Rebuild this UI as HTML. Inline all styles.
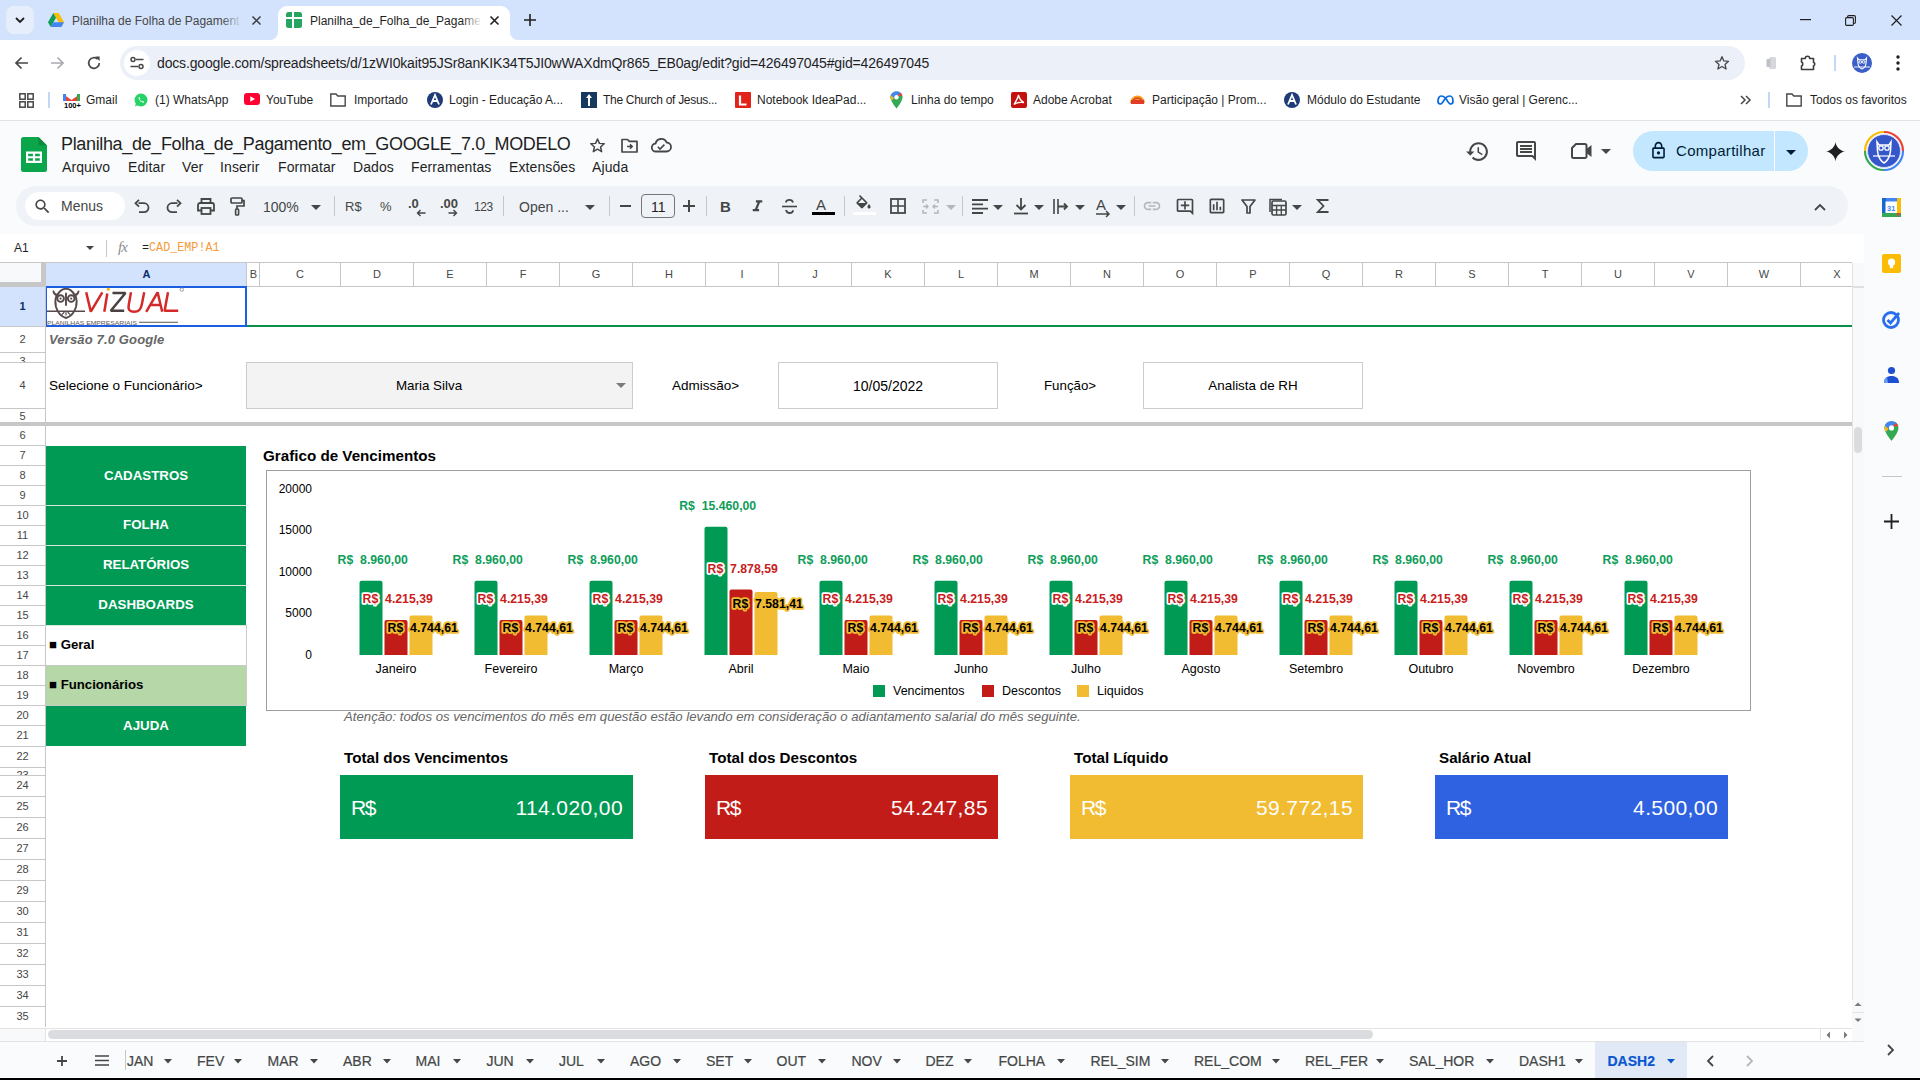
<!DOCTYPE html>
<html><head><meta charset="utf-8">
<style>
*{margin:0;padding:0;box-sizing:border-box}
html,body{width:1920px;height:1080px;overflow:hidden;background:#fff;font-family:"Liberation Sans",sans-serif;position:relative}
.a{position:absolute}
.t{position:absolute;white-space:nowrap;line-height:1}
svg{position:absolute;overflow:visible}
</style></head><body>

<!-- ============ CHROME TAB STRIP ============ -->
<div class="a" style="left:0;top:0;width:1920px;height:40px;background:#d3e3fd"></div>
<div class="a" style="left:6px;top:6px;width:28px;height:28px;border-radius:8px;background:#e6edfb"></div>
<svg style="left:14px;top:14px" width="12" height="12"><path d="M2 4 L6 8 L10 4" stroke="#1f1f1f" stroke-width="1.8" fill="none"/></svg>
<!-- inactive tab -->
<svg style="left:48px;top:13px" width="16" height="14" viewBox="0 0 16 14"><path d="M5.3 0 L10.7 0 L16 9.3 L13.3 14 Z" fill="#fbbc04"/><path d="M5.3 0 L0 9.3 L2.7 14 L8 4.7 Z" fill="#0f9d58"/><path d="M2.7 14 L13.3 14 L16 9.3 L5.3 9.3 Z" fill="#4285f4"/></svg>
<div class="a" style="left:72px;top:10px;width:168px;height:20px;overflow:hidden"><div class="t" id="tab1" style="left:0;top:5px;font-size:12px;color:#474747">Planilha de Folha de Pagamento</div></div>
<div class="a" style="left:222px;top:8px;width:20px;height:24px;background:linear-gradient(90deg,rgba(211,227,253,0),#d3e3fd)"></div>
<svg style="left:252px;top:16px" width="9" height="9"><path d="M0.5 0.5 L8.5 8.5 M8.5 0.5 L0.5 8.5" stroke="#3c3c3c" stroke-width="1.5"/></svg>
<!-- active tab -->
<div class="a" style="left:278px;top:6px;width:232px;height:40px;background:#fff;border-radius:9px 9px 0 0"></div>
<div class="a" style="left:270px;top:32px;width:8px;height:8px;background:#fff"></div>
<div class="a" style="left:262px;top:24px;width:16px;height:16px;background:#d3e3fd;border-radius:0 0 8px 0"></div>
<div class="a" style="left:510px;top:32px;width:8px;height:8px;background:#fff"></div>
<div class="a" style="left:510px;top:24px;width:16px;height:16px;background:#d3e3fd;border-radius:0 0 0 8px"></div>
<svg style="left:286px;top:12px" width="16" height="16"><rect x="0" y="0" width="16" height="16" rx="2.5" fill="#25a55f"/><rect x="0" y="5" width="16" height="2" fill="#fff"/><rect x="6" y="0" width="2" height="16" fill="#fff"/></svg>
<div class="a" style="left:310px;top:10px;width:170px;height:20px;overflow:hidden"><div class="t" id="tab2" style="left:0;top:5px;font-size:12px;color:#1f1f1f">Planilha_de_Folha_de_Pagamento</div></div>
<div class="a" style="left:462px;top:8px;width:20px;height:24px;background:linear-gradient(90deg,rgba(255,255,255,0),#fff)"></div>
<svg style="left:490px;top:16px" width="9" height="9"><path d="M0.5 0.5 L8.5 8.5 M8.5 0.5 L0.5 8.5" stroke="#1f1f1f" stroke-width="1.6"/></svg>
<svg style="left:524px;top:14px" width="12" height="12"><path d="M6 0 V12 M0 6 H12" stroke="#1f1f1f" stroke-width="1.6"/></svg>
<!-- window controls -->
<svg style="left:1800px;top:19px" width="11" height="2"><rect width="11" height="1.2" fill="#1f1f1f"/></svg>
<svg style="left:1845px;top:15px" width="11" height="11"><rect x="0.6" y="2.6" width="7.8" height="7.8" rx="1.2" fill="none" stroke="#1f1f1f" stroke-width="1.1"/><path d="M2.6 2.4 V1.8 A1.2 1.2 0 0 1 3.8 0.6 H9.2 A1.2 1.2 0 0 1 10.4 1.8 V7.2 A1.2 1.2 0 0 1 9.2 8.4 H8.6" fill="none" stroke="#1f1f1f" stroke-width="1.1"/></svg>
<svg style="left:1891px;top:15px" width="11" height="11"><path d="M0.5 0.5 L10.5 10.5 M10.5 0.5 L0.5 10.5" stroke="#1f1f1f" stroke-width="1.2"/></svg>

<!-- ============ CHROME TOOLBAR ============ -->
<div class="a" style="left:0;top:40px;width:1920px;height:80px;background:#fff;border-radius:10px 10px 0 0"></div>
<svg style="left:14px;top:56px" width="15" height="14"><path d="M14 7 H2 M7.5 1.5 L2 7 L7.5 12.5" stroke="#474747" stroke-width="1.7" fill="none"/></svg>
<svg style="left:50px;top:56px" width="15" height="14"><path d="M1 7 H13 M7.5 1.5 L13 7 L7.5 12.5" stroke="#a8abb0" stroke-width="1.7" fill="none"/></svg>
<svg style="left:87px;top:56px" width="14" height="14"><path d="M12.3 7 A5.3 5.3 0 1 1 10.6 3.1" stroke="#474747" stroke-width="1.7" fill="none"/><path d="M8.2 0.5 L12.6 0.5 L12.6 4.9 Z" fill="#474747"/></svg>
<div class="a" style="left:120px;top:46px;width:1625px;height:34px;border-radius:17px;background:#ecf0f9"></div>
<div class="a" style="left:124px;top:50px;width:26px;height:26px;border-radius:13px;background:#fff"></div>
<svg style="left:130px;top:56px" width="14" height="14"><path d="M6 3.5 H13.5 M0.5 10.5 H8" stroke="#474747" stroke-width="1.6"/><circle cx="3" cy="3.5" r="2" fill="none" stroke="#474747" stroke-width="1.5"/><circle cx="11" cy="10.5" r="2" fill="none" stroke="#474747" stroke-width="1.5"/></svg>
<div class="t" id="url" style="left:157px;top:56px;font-size:14px;letter-spacing:-0.16px;color:#1f1f1f">docs.google.com/spreadsheets/d/1zWI0kait95JSr8anKIK34T5JI0wWAXdmQr865_EB0ag/edit?gid=426497045#gid=426497045</div>
<svg style="left:1714px;top:55px" width="16" height="16" viewBox="0 0 24 24"><path d="M12 2.5 L14.8 8.9 L21.8 9.5 L16.5 14.1 L18.1 21 L12 17.3 L5.9 21 L7.5 14.1 L2.2 9.5 L9.2 8.9 Z" fill="none" stroke="#474747" stroke-width="2" stroke-linejoin="round"/></svg>
<svg style="left:1766px;top:56px" width="12" height="14"><rect x="3" y="1" width="7" height="12" rx="1.5" fill="#d5d7da"/><rect x="0.5" y="3" width="4" height="8" rx="1" fill="#bfc1c4"/></svg>
<svg style="left:1799px;top:54px" width="18" height="18" viewBox="0 0 18 18"><path d="M2.5 4.5 H6.3 A2.2 2.2 0 0 1 10.7 4.5 H14.5 V8.2 A1.9 1.9 0 0 1 14.5 11.8 V15.5 H2.5 V12 A2.2 2.2 0 0 0 2.5 8 Z" fill="none" stroke="#3c3c3c" stroke-width="1.6" stroke-linejoin="round"/></svg>
<div class="a" style="left:1834px;top:55px;width:2px;height:16px;background:#c4d7f5"></div>
<svg style="left:1852px;top:53px" width="20" height="20" viewBox="0 0 20 20"><circle cx="10" cy="10" r="10" fill="#3a5fc8"/><path d="M5.5 5 L7 6.8 H13 L14.5 5 L14 10.5 C13.6 13.5 11.5 15.5 10 16 C8.5 15.5 6.4 13.5 6 10.5 Z" fill="none" stroke="#fff" stroke-width="1.1"/><circle cx="8.3" cy="9" r="1.3" fill="none" stroke="#fff" stroke-width="0.9"/><circle cx="11.7" cy="9" r="1.3" fill="none" stroke="#fff" stroke-width="0.9"/><path d="M2 14 H18" stroke="#fff" stroke-width="0.9"/></svg>
<svg style="left:1896px;top:55px" width="4" height="16"><circle cx="2" cy="2" r="1.7" fill="#1f1f1f"/><circle cx="2" cy="8" r="1.7" fill="#1f1f1f"/><circle cx="2" cy="14" r="1.7" fill="#1f1f1f"/></svg>

<!-- ============ BOOKMARKS ============ -->

<svg style="left:19px;top:93px" width="15" height="15"><rect x="0.8" y="0.8" width="5.4" height="5.4" fill="none" stroke="#474747" stroke-width="1.5"/><rect x="8.8" y="0.8" width="5.4" height="5.4" fill="none" stroke="#474747" stroke-width="1.5"/><rect x="0.8" y="8.8" width="5.4" height="5.4" fill="none" stroke="#474747" stroke-width="1.5"/><rect x="8.8" y="8.8" width="5.4" height="5.4" fill="none" stroke="#474747" stroke-width="1.5"/></svg>
<div class="a" style="left:48px;top:92px;width:2px;height:16px;background:#c4d7f5"></div>
<svg style="left:63px;top:92px" width="17" height="16"><path d="M0 2 L8.5 8 L17 2 V9 H0 Z" fill="#ea4335"/><rect x="0" y="2" width="3" height="7" fill="#4285f4"/><rect x="14" y="2" width="3" height="7" fill="#34a853"/><rect x="1" y="9" width="16" height="7" fill="#fff"/><text x="1" y="15.5" font-size="7.5" font-family="Liberation Sans" font-weight="bold" fill="#000">100+</text></svg>
<div class="t" style="left:86px;top:94px;font-size:12px;color:#1f1f1f">Gmail</div>
<svg style="left:134px;top:93px" width="14" height="14"><circle cx="7" cy="7" r="6.5" fill="#25d366"/><path d="M1 13.5 L2 10 L4 12 Z" fill="#25d366"/><path d="M4.6 4.2 C4.2 5.5 5.8 8.4 8.5 9.6 C9.4 10 10 9.5 10.2 9 L9 8 L8.2 8.5 C7 8 6 7 5.6 6 L6.2 5.2 L5.4 4 Z" fill="#fff"/></svg>
<div class="t" style="left:155px;top:94px;font-size:12px;color:#1f1f1f">(1) WhatsApp</div>
<svg style="left:244px;top:93px" width="16" height="12"><rect width="16" height="12" rx="3" fill="#ff0033"/><path d="M6.3 3.3 L11 6 L6.3 8.7 Z" fill="#fff"/></svg>
<div class="t" style="left:266px;top:94px;font-size:12px;color:#1f1f1f">YouTube</div>
<svg style="left:330px;top:93px" width="16" height="14"><path d="M0.8 1 H6 L7.8 3 H15.2 V13 H0.8 Z" fill="none" stroke="#474747" stroke-width="1.4"/></svg>
<div class="t" style="left:354px;top:94px;font-size:12px;color:#1f1f1f">Importado</div>
<svg style="left:427px;top:92px" width="16" height="16"><circle cx="8" cy="8" r="8" fill="#1e3a78"/><path d="M4 12.5 L8 3 L12 12.5 M5.6 9 H10.4" stroke="#fff" stroke-width="1.8" fill="none"/></svg>
<div class="t" style="left:449px;top:94px;font-size:12px;color:#1f1f1f">Login - Educação A...</div>
<svg style="left:581px;top:92px" width="16" height="16"><rect width="16" height="16" fill="#16395e"/><path d="M8 2 L11 6 H9 V14 H7 V6 H5 Z" fill="#fff"/></svg>
<div class="t" style="left:603px;top:94px;font-size:12px;letter-spacing:-0.3px;color:#1f1f1f">The Church of Jesus...</div>
<svg style="left:735px;top:92px" width="16" height="16"><rect width="16" height="16" rx="1" fill="#e2231a"/><path d="M5 3.5 V12.5 H11.5" stroke="#fff" stroke-width="2.2" fill="none"/></svg>
<div class="t" style="left:757px;top:94px;font-size:12px;color:#1f1f1f">Notebook IdeaPad...</div>
<svg style="left:890px;top:91px" width="13" height="18"><path d="M6.5 0.5 C3 0.5 0.5 3 0.5 6.3 C0.5 10.5 6.5 17.5 6.5 17.5 C6.5 17.5 12.5 10.5 12.5 6.3 C12.5 3 10 0.5 6.5 0.5 Z" fill="#34a853"/><path d="M6.5 0.5 C3 0.5 0.5 3 0.5 6.3 C0.5 7.5 1 8.7 1.6 9.8 L10.8 1.8 C9.7 1 8.2 0.5 6.5 0.5Z" fill="#4285f4"/><path d="M1.6 9.8 L4 7 L0.7 4.5 C0.5 5 0.5 5.6 0.5 6.3 C0.5 7.5 1 8.7 1.6 9.8Z" fill="#fbbc04"/><path d="M10.8 1.8 L6.5 5.5 L12.3 4.6 C12 3.5 11.5 2.5 10.8 1.8Z" fill="#ea4335"/><circle cx="6.5" cy="6.3" r="2.2" fill="#fff"/></svg>
<div class="t" style="left:911px;top:94px;font-size:12px;color:#1f1f1f">Linha do tempo</div>
<svg style="left:1011px;top:92px" width="16" height="16"><rect width="16" height="16" rx="2" fill="#c5110d"/><path d="M3 12.5 C5 9.5 7 5 7.5 3 C8 5.5 10 9 13 10.5 C10 10 6 10.5 3 12.5 Z" fill="none" stroke="#fff" stroke-width="1.3"/></svg>
<div class="t" style="left:1033px;top:94px;font-size:12px;color:#1f1f1f">Adobe Acrobat</div>
<svg style="left:1129px;top:93px" width="17" height="12"><path d="M1 10 A7.5 7.5 0 0 1 16 10 Z" fill="#f6a21b"/><path d="M3.5 10 A5 5 0 0 1 13.5 10" stroke="#e23b2c" stroke-width="1.6" fill="none"/><rect x="2" y="7" width="13" height="4" fill="#e23b2c"/></svg>
<div class="t" style="left:1152px;top:94px;font-size:12px;color:#1f1f1f">Participação | Prom...</div>
<svg style="left:1284px;top:92px" width="16" height="16"><circle cx="8" cy="8" r="8" fill="#1e3a78"/><path d="M4 12.5 L8 3 L12 12.5 M5.6 9 H10.4" stroke="#fff" stroke-width="1.8" fill="none"/></svg>
<div class="t" style="left:1307px;top:94px;font-size:12px;color:#1f1f1f">Módulo do Estudante</div>
<svg style="left:1437px;top:95px" width="17" height="10"><path d="M4.2 1 C2 1 1 4 1 6 C1 8 2 9 3.2 9 C5.5 9 7.5 4 8.5 3 C9.5 2 11 1 12.8 1 C15 1 16 4 16 6 C16 8 15 9 13.8 9 C11.5 9 9.5 4 8.5 3 C7.5 2 6 1 4.2 1 Z" fill="none" stroke="#0668e1" stroke-width="1.7"/></svg>
<div class="t" style="left:1459px;top:94px;font-size:12px;color:#1f1f1f">Visão geral | Gerenc...</div>
<svg style="left:1740px;top:95px" width="12" height="10"><path d="M1 1 L5 5 L1 9 M6 1 L10 5 L6 9" stroke="#474747" stroke-width="1.5" fill="none"/></svg>
<div class="a" style="left:1768px;top:92px;width:2px;height:16px;background:#c4d7f5"></div>
<svg style="left:1786px;top:93px" width="16" height="14"><path d="M0.8 1 H6 L7.8 3 H15.2 V13 H0.8 Z" fill="none" stroke="#474747" stroke-width="1.4"/></svg>
<div class="t" style="left:1810px;top:94px;font-size:12px;color:#1f1f1f">Todos os favoritos</div>

<div class="a" style="left:0;top:120px;width:1920px;height:1px;background:#e3e3e3"></div>

<!-- ============ SHEETS HEADER ============ -->
<div class="a" style="left:0;top:121px;width:1920px;height:113px;background:#f9fbfd"></div>
<svg style="left:21px;top:137px" width="26" height="35" viewBox="0 0 26 35"><path d="M0 2.5 A2.5 2.5 0 0 1 2.5 0 H17.5 L26 8.5 V32.5 A2.5 2.5 0 0 1 23.5 35 H2.5 A2.5 2.5 0 0 1 0 32.5 Z" fill="#0ba64c"/><path d="M17.5 0 L26 8.5 H19.5 A2 2 0 0 1 17.5 6.5 Z" fill="#0a8a3e"/><path d="M5 14.5 H21 V26 H5 Z M7.2 16.7 V19.3 H11.9 V16.7 Z M14.1 16.7 V19.3 H18.8 V16.7 Z M7.2 21.3 V23.8 H11.9 V21.3 Z M14.1 21.3 V23.8 H18.8 V21.3 Z" fill="#fff" fill-rule="evenodd"/></svg>
<div class="t" style="left:61px;top:135px;font-size:18px;letter-spacing:-0.35px;color:#1f1f1f">Planilha_de_Folha_de_Pagamento_em_GOOGLE_7.0_MODELO</div>
<svg style="left:589px;top:137px" width="17" height="17" viewBox="0 0 24 24"><path d="M12 2.8 L14.7 9 L21.5 9.6 L16.3 14.1 L17.9 20.8 L12 17.2 L6.1 20.8 L7.7 14.1 L2.5 9.6 L9.3 9 Z" fill="none" stroke="#444746" stroke-width="2.1" stroke-linejoin="round"/></svg>
<svg style="left:621px;top:138px" width="17" height="15" viewBox="0 0 17 15"><path d="M1 1.5 H6.5 L8.3 3.3 H16 V14 H1 Z" fill="none" stroke="#444746" stroke-width="1.7" stroke-linejoin="round"/><path d="M6 8.6 H11 M9 6.4 L11.2 8.6 L9 10.8" stroke="#444746" stroke-width="1.5" fill="none"/></svg>
<svg style="left:651px;top:137px" width="20" height="16" viewBox="0 0 20 16"><path d="M5 14.5 A4 4 0 0 1 4.6 6.5 A5.8 5.8 0 0 1 15.6 5.5 A4.5 4.5 0 0 1 15.5 14.5 Z" fill="none" stroke="#444746" stroke-width="1.8" stroke-linejoin="round"/><path d="M6.8 9.8 L9 12 L13.4 7.6" stroke="#444746" stroke-width="1.6" fill="none"/></svg>
<div class="t" style="left:62px;top:160px;font-size:14px;letter-spacing:0.1px;color:#1f1f1f">Arquivo</div>
<div class="t" style="left:128px;top:160px;font-size:14px;letter-spacing:0.1px;color:#1f1f1f">Editar</div>
<div class="t" style="left:182px;top:160px;font-size:14px;letter-spacing:0.1px;color:#1f1f1f">Ver</div>
<div class="t" style="left:220px;top:160px;font-size:14px;letter-spacing:0.1px;color:#1f1f1f">Inserir</div>
<div class="t" style="left:278px;top:160px;font-size:14px;letter-spacing:0.1px;color:#1f1f1f">Formatar</div>
<div class="t" style="left:353px;top:160px;font-size:14px;letter-spacing:0.1px;color:#1f1f1f">Dados</div>
<div class="t" style="left:411px;top:160px;font-size:14px;letter-spacing:0.1px;color:#1f1f1f">Ferramentas</div>
<div class="t" style="left:509px;top:160px;font-size:14px;letter-spacing:0.1px;color:#1f1f1f">Extensões</div>
<div class="t" style="left:592px;top:160px;font-size:14px;letter-spacing:0.1px;color:#1f1f1f">Ajuda</div>
<svg style="left:1465px;top:139px" width="25" height="25" viewBox="0 0 24 24"><path d="M13 3c-4.97 0-9 4.03-9 9H1l3.89 3.89.07.14L9 12H6c0-3.87 3.13-7 7-7s7 3.13 7 7-3.13 7-7 7c-1.93 0-3.68-.79-4.94-2.06l-1.42 1.42C8.27 19.99 10.51 21 13 21c4.97 0 9-4.03 9-9s-4.03-9-9-9zm-1 5v5l4.28 2.54.72-1.21-3.5-2.08V8H12z" fill="#444746"/></svg>
<svg style="left:1514px;top:139px" width="24" height="24" viewBox="0 0 24 24"><path d="M21.99 4c0-1.1-.89-2-1.99-2H4c-1.1 0-2 .9-2 2v12c0 1.1.9 2 2 2h14l4 4-.01-18zM20 4v13.17L18.83 16H4V4h16zM6 12h12v2H6zm0-3h12v2H6zm0-3h12v2H6z" fill="#444746"/></svg>
<svg style="left:1571px;top:143px" width="22" height="16" viewBox="0 0 22 16"><path d="M5 1 H14 A1.5 1.5 0 0 1 15.5 2.5 V13.5 A1.5 1.5 0 0 1 14 15 H2.5 A1.5 1.5 0 0 1 1 13.5 V5 Z" fill="none" stroke="#444746" stroke-width="2" stroke-linejoin="round"/><path d="M15.5 6 L20.5 2 V14 L15.5 10 Z" fill="#444746"/></svg>
<svg style="left:1601px;top:149px" width="10" height="5"><path d="M0 0 L10 0 L5 5 Z" fill="#444746"/></svg>
<div class="a" style="left:1633px;top:131px;width:175px;height:40px;border-radius:20px;background:#c2e7ff"></div>
<div class="a" style="left:1774px;top:131px;width:1px;height:40px;background:#f9fbfd"></div>
<svg style="left:1649px;top:141px" width="19" height="19" viewBox="0 0 24 24"><path d="M18 8h-1V6c0-2.76-2.24-5-5-5S7 3.24 7 6v2H6c-1.1 0-2 .9-2 2v10c0 1.1.9 2 2 2h12c1.1 0 2-.9 2-2V10c0-1.1-.9-2-2-2zM9 6c0-1.66 1.34-3 3-3s3 1.34 3 3v2H9V6zm9 14H6V10h12v10zm-6-3c1.1 0 2-.9 2-2s-.9-2-2-2-2 .9-2 2 .9 2 2 2z" fill="#001d35"/></svg>
<div class="t" style="left:1676px;top:143px;font-size:15px;letter-spacing:0.3px;color:#001d35">Compartilhar</div>
<svg style="left:1786px;top:150px" width="10" height="5"><path d="M0 0 L10 0 L5 5 Z" fill="#001d35"/></svg>
<svg style="left:1825px;top:141px" width="21" height="21" viewBox="0 0 24 24"><path d="M12 1 C12.6 6.5 17.5 11.4 23 12 C17.5 12.6 12.6 17.5 12 23 C11.4 17.5 6.5 12.6 1 12 C6.5 11.4 11.4 6.5 12 1 Z" fill="#1f1f1f"/></svg>
<svg style="left:1864px;top:131px" width="40" height="40" viewBox="0 0 40 40"><path d="M20 1 A19 19 0 0 1 39 20" stroke="#ea4335" stroke-width="2.2" fill="none"/><path d="M39 20 A19 19 0 0 1 20 39" stroke="#4285f4" stroke-width="2.2" fill="none"/><path d="M20 39 A19 19 0 0 1 1 20" stroke="#34a853" stroke-width="2.2" fill="none"/><path d="M1 20 A19 19 0 0 1 20 1" stroke="#fbbc04" stroke-width="2.2" fill="none"/><circle cx="20" cy="20" r="16.5" fill="#3557c9"/><circle cx="20" cy="20" r="16.5" fill="none" stroke="#dfe6ff" stroke-width="0.8"/><path d="M13 11 L15 14 H25 L27 11 L26.5 20 C26 27 22 31 20 32 C18 31 14 27 13.5 20 Z" fill="none" stroke="#fff" stroke-width="1.5"/><circle cx="17" cy="17" r="2.2" fill="none" stroke="#fff" stroke-width="1.3"/><circle cx="23" cy="17" r="2.2" fill="none" stroke="#fff" stroke-width="1.3"/><path d="M9 25 H31" stroke="#fff" stroke-width="1.2"/></svg>
<div class="a" style="left:16px;top:186px;width:1832px;height:40px;border-radius:20px;background:#eff2f7"></div>
<div class="a" style="left:25px;top:192px;width:100px;height:28px;border-radius:14px;background:#fff"></div>
<svg style="left:33px;top:197px" width="19" height="19" viewBox="0 0 24 24"><path d="M15.5 14h-.79l-.28-.27C15.41 12.59 16 11.11 16 9.5 16 5.91 13.09 3 9.5 3S3 5.91 3 9.5 5.91 16 9.5 16c1.61 0 3.09-.59 4.23-1.57l.27.28v.79l5 4.99L20.49 19l-4.99-5zm-6 0C7.01 14 5 11.99 5 9.5S7.01 5 9.5 5 14 7.01 14 9.5 11.99 14 9.5 14z" fill="#444746"/></svg>
<div class="t" style="left:61px;top:199px;font-size:14px;color:#444746">Menus</div>
<svg style="left:134px;top:199px" width="16" height="15" viewBox="0 0 16 15"><path d="M4.5 4.2 H10 A4.5 4.5 0 0 1 10 13.2 H5" stroke="#444746" stroke-width="1.8" fill="none"/><path d="M5 0.8 L1.5 4.2 L5 7.6" stroke="#444746" stroke-width="1.8" fill="none"/></svg>
<svg style="left:166px;top:199px" width="16" height="15" viewBox="0 0 16 15"><path d="M11.5 4.2 H6 A4.5 4.5 0 0 0 6 13.2 H11" stroke="#444746" stroke-width="1.8" fill="none"/><path d="M11 0.8 L14.5 4.2 L11 7.6" stroke="#444746" stroke-width="1.8" fill="none"/></svg>
<svg style="left:197px;top:198px" width="18" height="17" viewBox="0 0 18 17"><path d="M4.5 5 V1 H13.5 V5" stroke="#444746" stroke-width="1.8" fill="none"/><path d="M4.5 12.5 H1 V7 A2 2 0 0 1 3 5 H15 A2 2 0 0 1 17 7 V12.5 H13.5" stroke="#444746" stroke-width="1.8" fill="none"/><rect x="4.5" y="10" width="9" height="6" stroke="#444746" stroke-width="1.8" fill="none"/></svg>
<svg style="left:230px;top:197px" width="15" height="19" viewBox="0 0 15 19"><rect x="1" y="1" width="11" height="5" rx="1" stroke="#444746" stroke-width="1.7" fill="none"/><path d="M12 3.5 H14 V9 H7 V12" stroke="#444746" stroke-width="1.7" fill="none"/><rect x="5.6" y="12" width="3" height="6" rx="0.8" stroke="#444746" stroke-width="1.6" fill="none"/></svg>
<div class="t" style="left:263px;top:200px;font-size:14px;color:#444746">100%</div>
<svg style="left:311px;top:205px" width="10" height="5"><path d="M0 0 L10 0 L5 5 Z" fill="#444746"/></svg>
<div class="a" style="left:334px;top:196px;width:1px;height:20px;background:#c7c7c7"></div>
<div class="t" style="left:345px;top:200px;font-size:13px;color:#444746">R$</div>
<div class="t" style="left:380px;top:200px;font-size:13px;color:#444746">%</div>
<div class="t" style="left:408px;top:197px;font-size:13px;font-weight:bold;color:#444746">.0</div>
<svg style="left:416px;top:209px" width="10" height="8"><path d="M9.5 4 H2 M4.5 1 L1.5 4 L4.5 7" stroke="#444746" stroke-width="1.4" fill="none"/></svg>
<div class="t" style="left:440px;top:197px;font-size:13px;font-weight:bold;color:#444746">.00</div>
<svg style="left:448px;top:209px" width="10" height="8"><path d="M0.5 4 H8 M5.5 1 L8.5 4 L5.5 7" stroke="#444746" stroke-width="1.4" fill="none"/></svg>
<div class="t" style="left:474px;top:201px;font-size:12px;letter-spacing:-0.4px;color:#444746">123</div>
<div class="a" style="left:503px;top:196px;width:1px;height:20px;background:#c7c7c7"></div>
<div class="t" style="left:519px;top:200px;font-size:14px;color:#444746">Open ...</div>
<svg style="left:585px;top:205px" width="10" height="5"><path d="M0 0 L10 0 L5 5 Z" fill="#444746"/></svg>
<div class="a" style="left:609px;top:196px;width:1px;height:20px;background:#c7c7c7"></div>
<div class="a" style="left:620px;top:205px;width:11px;height:2px;background:#444746"></div>
<div class="a" style="left:641px;top:194px;width:34px;height:24px;border:1px solid #747775;border-radius:4px"></div>
<div class="t" style="left:651px;top:200px;font-size:14px;color:#1f1f1f">11</div>
<svg style="left:683px;top:200px" width="12" height="12"><path d="M6 0 V12 M0 6 H12" stroke="#444746" stroke-width="2"/></svg>
<div class="a" style="left:706px;top:196px;width:1px;height:20px;background:#c7c7c7"></div>
<div class="t" style="left:720px;top:199px;font-size:15px;font-weight:bold;color:#444746">B</div>
<svg style="left:748px;top:197px" width="19" height="19" viewBox="0 0 24 24"><path d="M10 4v3h2.21l-3.42 8H6v3h8v-3h-2.21l3.42-8H18V4z" fill="#444746"/></svg>
<svg style="left:781px;top:198px" width="17" height="17" viewBox="0 0 17 17"><path d="M12 4.5 C11.5 2.5 10 1.8 8.5 1.8 C6.5 1.8 5 3 5 4.5 M5 12 C5.5 14 7 15 8.5 15 C10.5 15 12 13.8 12 12.2" stroke="#444746" stroke-width="1.8" fill="none"/><path d="M1 8.5 H16" stroke="#444746" stroke-width="1.6"/></svg>
<div class="t" style="left:816px;top:197px;font-size:15px;color:#444746">A</div>
<div class="a" style="left:812px;top:212px;width:23px;height:3px;background:#000"></div>
<div class="a" style="left:844px;top:196px;width:1px;height:20px;background:#c7c7c7"></div>
<svg style="left:854px;top:195px" width="19" height="19" viewBox="0 0 24 24"><path d="M16.56 8.94L7.62 0 6.21 1.41l2.38 2.38-5.15 5.15c-.59.59-.59 1.54 0 2.12l5.5 5.5c.29.29.68.44 1.06.44s.77-.15 1.06-.44l5.5-5.5c.59-.58.59-1.53 0-2.12zM5.21 10L10 5.21 14.79 10H5.21zM19 11.5s-2 2.17-2 3.5c0 1.1.9 2 2 2s2-.9 2-2c0-1.33-2-3.5-2-3.5z" fill="#444746"/></svg>
<div class="a" style="left:853px;top:212px;width:23px;height:3px;background:#fff"></div>
<svg style="left:890px;top:198px" width="16" height="16" viewBox="0 0 16 16"><rect x="1" y="1" width="14" height="14" stroke="#444746" stroke-width="1.8" fill="none"/><path d="M8 1 V15 M1 8 H15" stroke="#444746" stroke-width="1.6"/></svg>
<svg style="left:922px;top:199px" width="17" height="15" viewBox="0 0 17 15"><path d="M1 4 V1 H5 M12 1 H16 V4 M16 11 V14 H12 M5 14 H1 V11" stroke="#b4b7bb" stroke-width="1.6" fill="none"/><path d="M1 7.5 H6 M4 5.5 L6 7.5 L4 9.5 M16 7.5 H11 M13 5.5 L11 7.5 L13 9.5" stroke="#b4b7bb" stroke-width="1.4" fill="none"/></svg>
<svg style="left:946px;top:205px" width="10" height="5"><path d="M0 0 L10 0 L5 5 Z" fill="#b4b7bb"/></svg>
<div class="a" style="left:962px;top:196px;width:1px;height:20px;background:#c7c7c7"></div>
<svg style="left:972px;top:199px" width="16" height="15" viewBox="0 0 16 15"><path d="M0 1 H16 M0 5.3 H11 M0 9.6 H16 M0 14 H11" stroke="#444746" stroke-width="1.8"/></svg>
<svg style="left:993px;top:205px" width="10" height="5"><path d="M0 0 L10 0 L5 5 Z" fill="#444746"/></svg>
<svg style="left:1013px;top:198px" width="16" height="17" viewBox="0 0 16 17"><path d="M8 0 V11 M3.5 7 L8 11.5 L12.5 7" stroke="#444746" stroke-width="1.8" fill="none"/><path d="M1 15.5 H15" stroke="#444746" stroke-width="1.8"/></svg>
<svg style="left:1034px;top:205px" width="10" height="5"><path d="M0 0 L10 0 L5 5 Z" fill="#444746"/></svg>
<svg style="left:1053px;top:198px" width="17" height="17" viewBox="0 0 17 17"><path d="M1 1 V16 M5 1 V16" stroke="#444746" stroke-width="1.6"/><path d="M5 8.5 H14 M11 5.5 L14 8.5 L11 11.5" stroke="#444746" stroke-width="1.8" fill="none"/></svg>
<svg style="left:1075px;top:205px" width="10" height="5"><path d="M0 0 L10 0 L5 5 Z" fill="#444746"/></svg>
<div class="t" style="left:1096px;top:197px;font-size:15px;color:#444746">A</div>
<svg style="left:1096px;top:208px" width="16" height="8"><path d="M0 6 H13 M10 3 L13 6 L10 9" stroke="#444746" stroke-width="1.5" fill="none"/></svg>
<svg style="left:1116px;top:205px" width="10" height="5"><path d="M0 0 L10 0 L5 5 Z" fill="#444746"/></svg>
<div class="a" style="left:1134px;top:196px;width:1px;height:20px;background:#c7c7c7"></div>
<svg style="left:1142px;top:196px" width="20" height="20" viewBox="0 0 24 24"><path d="M3.9 12c0-1.71 1.39-3.1 3.1-3.1h4V7H7c-2.76 0-5 2.24-5 5s2.24 5 5 5h4v-1.9H7c-1.71 0-3.1-1.39-3.1-3.1zM8 13h8v-2H8v2zm9-6h-4v1.9h4c1.71 0 3.1 1.39 3.1 3.1s-1.39 3.1-3.1 3.1h-4V17h4c2.76 0 5-2.24 5-5s-2.24-5-5-5z" fill="#b4b7bb"/></svg>
<svg style="left:1175px;top:197px" width="20" height="20" viewBox="0 0 24 24"><path d="M22 4c0-1.1-.9-2-2-2H4c-1.1 0-1.99.9-1.99 2L2 16c0 1.1.9 2 2 2h14l4 4V4zm-2 13.17L18.83 16H4V4h16v13.17zM13 5h-2v4H7v2h4v4h2v-4h4V9h-4z" fill="#444746"/></svg>
<svg style="left:1207px;top:196px" width="20" height="20" viewBox="0 0 24 24"><path d="M19 3H5c-1.1 0-2 .9-2 2v14c0 1.1.9 2 2 2h14c1.1 0 2-.9 2-2V5c0-1.1-.9-2-2-2zm0 16H5V5h14v14zM7 10h2v7H7zm4-3h2v10h-2zm4 6h2v4h-2z" fill="#444746"/></svg>
<svg style="left:1241px;top:199px" width="15" height="15" viewBox="0 0 15 15"><path d="M1 1 H14 L9 7.5 V14 H6 V7.5 Z" stroke="#444746" stroke-width="1.7" fill="none" stroke-linejoin="round"/></svg>
<svg style="left:1269px;top:198px" width="18" height="18" viewBox="0 0 18 18"><rect x="3" y="3" width="14" height="14" rx="1.5" stroke="#444746" stroke-width="1.7" fill="none"/><path d="M1 14 V1.5 H13" stroke="#444746" stroke-width="1.5" fill="none"/><path d="M3 7.5 H17 M3 12 H17 M7.6 7.5 V17 M12.3 7.5 V17" stroke="#444746" stroke-width="1.3"/></svg>
<svg style="left:1292px;top:205px" width="10" height="5"><path d="M0 0 L10 0 L5 5 Z" fill="#444746"/></svg>
<svg style="left:1317px;top:199px" width="12" height="14" viewBox="0 0 12 14"><path d="M11.5 1 H0.8 L6.5 7 L0.8 13 H11.5" stroke="#444746" stroke-width="1.8" fill="none"/></svg>
<svg style="left:1814px;top:203px" width="12" height="8"><path d="M1 7 L6 2 L11 7" stroke="#444746" stroke-width="1.8" fill="none"/></svg>

<!-- ============ FORMULA BAR ============ -->
<div class="a" style="left:0;top:234px;width:1864px;height:28px;background:#fff"></div>
<div id="fbar"></div>

<!-- ============ GRID ============ -->
<div class="t" style="left:14px;top:242px;font-size:12px;color:#1f1f1f">A1</div>
<svg style="left:86px;top:246px" width="8" height="4"><path d="M0 0 H8 L4 4 Z" fill="#444746"/></svg>
<div class="a" style="left:106px;top:240px;width:1px;height:17px;background:#c7c7c7"></div>
<div class="t" style="left:118px;top:240px;font-size:15px;font-style:italic;font-family:'Liberation Serif',serif;color:#8a8d91;letter-spacing:-1px">fx</div>
<div class="t" style="left:142px;top:241px;font-size:13.5px;font-family:'Liberation Mono',monospace;color:#f49b3a;transform:scaleX(0.87);transform-origin:0 0"><span style="color:#1f1f1f">=</span>CAD_EMP!A1</div>
<div class="a" style="left:0;top:262px;width:1852px;height:1px;background:#c7c7c7"></div>
<div class="a" style="left:0;top:263px;width:41px;height:19px;background:#f8f9fa"></div>
<div class="a" style="left:41px;top:263px;width:5px;height:23px;background:#c7c7c7"></div>
<div class="a" style="left:0;top:282px;width:46px;height:5px;background:#c7c7c7"></div>
<div class="a" style="left:46px;top:263px;width:200px;height:23px;background:#d3e3fd"></div>
<div class="a" style="left:46px;top:286px;width:1806px;height:1px;background:#c7c7c7"></div>
<div class="a" style="left:246px;top:263px;width:1px;height:23px;background:#c7c7c7"></div>
<div class="t" style="left:126.5px;width:40px;text-align:center;top:269px;font-size:11px;font-weight:bold;color:#0b2e6b;">A</div>
<div class="a" style="left:259px;top:263px;width:1px;height:23px;background:#c7c7c7"></div>
<div class="t" style="left:233.5px;width:40px;text-align:center;top:269px;font-size:11px;color:#444746;">B</div>
<div class="a" style="left:340px;top:263px;width:1px;height:23px;background:#c7c7c7"></div>
<div class="t" style="left:280.0px;width:40px;text-align:center;top:269px;font-size:11px;color:#444746;">C</div>
<div class="a" style="left:413px;top:263px;width:1px;height:23px;background:#c7c7c7"></div>
<div class="t" style="left:357.0px;width:40px;text-align:center;top:269px;font-size:11px;color:#444746;">D</div>
<div class="a" style="left:486px;top:263px;width:1px;height:23px;background:#c7c7c7"></div>
<div class="t" style="left:430.0px;width:40px;text-align:center;top:269px;font-size:11px;color:#444746;">E</div>
<div class="a" style="left:559px;top:263px;width:1px;height:23px;background:#c7c7c7"></div>
<div class="t" style="left:503.0px;width:40px;text-align:center;top:269px;font-size:11px;color:#444746;">F</div>
<div class="a" style="left:632px;top:263px;width:1px;height:23px;background:#c7c7c7"></div>
<div class="t" style="left:576.0px;width:40px;text-align:center;top:269px;font-size:11px;color:#444746;">G</div>
<div class="a" style="left:705px;top:263px;width:1px;height:23px;background:#c7c7c7"></div>
<div class="t" style="left:649.0px;width:40px;text-align:center;top:269px;font-size:11px;color:#444746;">H</div>
<div class="a" style="left:778px;top:263px;width:1px;height:23px;background:#c7c7c7"></div>
<div class="t" style="left:722.0px;width:40px;text-align:center;top:269px;font-size:11px;color:#444746;">I</div>
<div class="a" style="left:851px;top:263px;width:1px;height:23px;background:#c7c7c7"></div>
<div class="t" style="left:795.0px;width:40px;text-align:center;top:269px;font-size:11px;color:#444746;">J</div>
<div class="a" style="left:924px;top:263px;width:1px;height:23px;background:#c7c7c7"></div>
<div class="t" style="left:868.0px;width:40px;text-align:center;top:269px;font-size:11px;color:#444746;">K</div>
<div class="a" style="left:997px;top:263px;width:1px;height:23px;background:#c7c7c7"></div>
<div class="t" style="left:941.0px;width:40px;text-align:center;top:269px;font-size:11px;color:#444746;">L</div>
<div class="a" style="left:1070px;top:263px;width:1px;height:23px;background:#c7c7c7"></div>
<div class="t" style="left:1014.0px;width:40px;text-align:center;top:269px;font-size:11px;color:#444746;">M</div>
<div class="a" style="left:1143px;top:263px;width:1px;height:23px;background:#c7c7c7"></div>
<div class="t" style="left:1087.0px;width:40px;text-align:center;top:269px;font-size:11px;color:#444746;">N</div>
<div class="a" style="left:1216px;top:263px;width:1px;height:23px;background:#c7c7c7"></div>
<div class="t" style="left:1160.0px;width:40px;text-align:center;top:269px;font-size:11px;color:#444746;">O</div>
<div class="a" style="left:1289px;top:263px;width:1px;height:23px;background:#c7c7c7"></div>
<div class="t" style="left:1233.0px;width:40px;text-align:center;top:269px;font-size:11px;color:#444746;">P</div>
<div class="a" style="left:1362px;top:263px;width:1px;height:23px;background:#c7c7c7"></div>
<div class="t" style="left:1306.0px;width:40px;text-align:center;top:269px;font-size:11px;color:#444746;">Q</div>
<div class="a" style="left:1435px;top:263px;width:1px;height:23px;background:#c7c7c7"></div>
<div class="t" style="left:1379.0px;width:40px;text-align:center;top:269px;font-size:11px;color:#444746;">R</div>
<div class="a" style="left:1508px;top:263px;width:1px;height:23px;background:#c7c7c7"></div>
<div class="t" style="left:1452.0px;width:40px;text-align:center;top:269px;font-size:11px;color:#444746;">S</div>
<div class="a" style="left:1581px;top:263px;width:1px;height:23px;background:#c7c7c7"></div>
<div class="t" style="left:1525.0px;width:40px;text-align:center;top:269px;font-size:11px;color:#444746;">T</div>
<div class="a" style="left:1654px;top:263px;width:1px;height:23px;background:#c7c7c7"></div>
<div class="t" style="left:1598.0px;width:40px;text-align:center;top:269px;font-size:11px;color:#444746;">U</div>
<div class="a" style="left:1727px;top:263px;width:1px;height:23px;background:#c7c7c7"></div>
<div class="t" style="left:1671.0px;width:40px;text-align:center;top:269px;font-size:11px;color:#444746;">V</div>
<div class="a" style="left:1800px;top:263px;width:1px;height:23px;background:#c7c7c7"></div>
<div class="t" style="left:1744.0px;width:40px;text-align:center;top:269px;font-size:11px;color:#444746;">W</div>

<div class="t" style="left:1817px;width:40px;text-align:center;top:269px;font-size:11px;color:#444746;">X</div>
<div class="a" style="left:1852px;top:263px;width:12px;height:765px;background:#f8f9fa;border-left:1px solid #e3e3e3"></div>
<div class="a" style="left:1853px;top:286px;width:11px;height:2px;background:#e0e0e0"></div>
<div class="a" style="left:45px;top:286px;width:1px;height:742px;background:#c7c7c7"></div>
<div class="a" style="left:0;top:287px;width:45px;height:39px;background:#d3e3fd"></div>
<div class="a" style="left:0;top:326px;width:45px;height:1px;background:#c7c7c7"></div>
<div class="t" style="left:0;width:45px;text-align:center;top:301.0px;font-size:11px;font-weight:bold;color:#0b2e6b;">1</div>
<div class="a" style="left:0;top:352px;width:45px;height:1px;background:#c7c7c7"></div>
<div class="t" style="left:0;width:45px;text-align:center;top:334.0px;font-size:11px;color:#444746;">2</div>
<div class="a" style="left:0;top:362px;width:45px;height:1px;background:#c7c7c7"></div>
<div class="a" style="left:0;top:353px;width:45px;height:9px;overflow:hidden"><div class="t" style="left:0;width:45px;text-align:center;top:2.8px;font-size:11px;color:#444746">3</div></div>
<div class="a" style="left:0;top:408px;width:45px;height:1px;background:#c7c7c7"></div>
<div class="t" style="left:0;width:45px;text-align:center;top:380.0px;font-size:11px;color:#444746;">4</div>
<div class="a" style="left:0;top:422px;width:45px;height:1px;background:#c7c7c7"></div>
<div class="t" style="left:0;width:45px;text-align:center;top:411.0px;font-size:11px;color:#444746;">5</div>
<div class="a" style="left:0;top:445px;width:45px;height:1px;background:#c7c7c7"></div>
<div class="t" style="left:0;width:45px;text-align:center;top:430.0px;font-size:11px;color:#444746;">6</div>
<div class="a" style="left:0;top:465px;width:45px;height:1px;background:#c7c7c7"></div>
<div class="t" style="left:0;width:45px;text-align:center;top:450.0px;font-size:11px;color:#444746;">7</div>
<div class="a" style="left:0;top:485px;width:45px;height:1px;background:#c7c7c7"></div>
<div class="t" style="left:0;width:45px;text-align:center;top:470.0px;font-size:11px;color:#444746;">8</div>
<div class="a" style="left:0;top:505px;width:45px;height:1px;background:#c7c7c7"></div>
<div class="t" style="left:0;width:45px;text-align:center;top:490.0px;font-size:11px;color:#444746;">9</div>
<div class="a" style="left:0;top:525px;width:45px;height:1px;background:#c7c7c7"></div>
<div class="t" style="left:0;width:45px;text-align:center;top:510.0px;font-size:11px;color:#444746;">10</div>
<div class="a" style="left:0;top:545px;width:45px;height:1px;background:#c7c7c7"></div>
<div class="t" style="left:0;width:45px;text-align:center;top:530.0px;font-size:11px;color:#444746;">11</div>
<div class="a" style="left:0;top:565px;width:45px;height:1px;background:#c7c7c7"></div>
<div class="t" style="left:0;width:45px;text-align:center;top:550.0px;font-size:11px;color:#444746;">12</div>
<div class="a" style="left:0;top:585px;width:45px;height:1px;background:#c7c7c7"></div>
<div class="t" style="left:0;width:45px;text-align:center;top:570.0px;font-size:11px;color:#444746;">13</div>
<div class="a" style="left:0;top:605px;width:45px;height:1px;background:#c7c7c7"></div>
<div class="t" style="left:0;width:45px;text-align:center;top:590.0px;font-size:11px;color:#444746;">14</div>
<div class="a" style="left:0;top:625px;width:45px;height:1px;background:#c7c7c7"></div>
<div class="t" style="left:0;width:45px;text-align:center;top:610.0px;font-size:11px;color:#444746;">15</div>
<div class="a" style="left:0;top:645px;width:45px;height:1px;background:#c7c7c7"></div>
<div class="t" style="left:0;width:45px;text-align:center;top:630.0px;font-size:11px;color:#444746;">16</div>
<div class="a" style="left:0;top:665px;width:45px;height:1px;background:#c7c7c7"></div>
<div class="t" style="left:0;width:45px;text-align:center;top:650.0px;font-size:11px;color:#444746;">17</div>
<div class="a" style="left:0;top:685px;width:45px;height:1px;background:#c7c7c7"></div>
<div class="t" style="left:0;width:45px;text-align:center;top:670.0px;font-size:11px;color:#444746;">18</div>
<div class="a" style="left:0;top:705px;width:45px;height:1px;background:#c7c7c7"></div>
<div class="t" style="left:0;width:45px;text-align:center;top:690.0px;font-size:11px;color:#444746;">19</div>
<div class="a" style="left:0;top:725px;width:45px;height:1px;background:#c7c7c7"></div>
<div class="t" style="left:0;width:45px;text-align:center;top:710.0px;font-size:11px;color:#444746;">20</div>
<div class="a" style="left:0;top:746px;width:45px;height:1px;background:#c7c7c7"></div>
<div class="t" style="left:0;width:45px;text-align:center;top:730.0px;font-size:11px;color:#444746;">21</div>
<div class="a" style="left:0;top:767px;width:45px;height:1px;background:#c7c7c7"></div>
<div class="t" style="left:0;width:45px;text-align:center;top:750.5px;font-size:11px;color:#444746;">22</div>
<div class="a" style="left:0;top:775px;width:45px;height:1px;background:#c7c7c7"></div>
<div class="a" style="left:0;top:768px;width:45px;height:7px;overflow:hidden"><div class="t" style="left:0;width:45px;text-align:center;top:2.0px;font-size:11px;color:#444746">23</div></div>
<div class="a" style="left:0;top:796px;width:45px;height:1px;background:#c7c7c7"></div>
<div class="t" style="left:0;width:45px;text-align:center;top:779.5px;font-size:11px;color:#444746;">24</div>
<div class="a" style="left:0;top:817px;width:45px;height:1px;background:#c7c7c7"></div>
<div class="t" style="left:0;width:45px;text-align:center;top:800.5px;font-size:11px;color:#444746;">25</div>
<div class="a" style="left:0;top:838px;width:45px;height:1px;background:#c7c7c7"></div>
<div class="t" style="left:0;width:45px;text-align:center;top:821.5px;font-size:11px;color:#444746;">26</div>
<div class="a" style="left:0;top:859px;width:45px;height:1px;background:#c7c7c7"></div>
<div class="t" style="left:0;width:45px;text-align:center;top:842.5px;font-size:11px;color:#444746;">27</div>
<div class="a" style="left:0;top:880px;width:45px;height:1px;background:#c7c7c7"></div>
<div class="t" style="left:0;width:45px;text-align:center;top:863.5px;font-size:11px;color:#444746;">28</div>
<div class="a" style="left:0;top:901px;width:45px;height:1px;background:#c7c7c7"></div>
<div class="t" style="left:0;width:45px;text-align:center;top:884.5px;font-size:11px;color:#444746;">29</div>
<div class="a" style="left:0;top:922px;width:45px;height:1px;background:#c7c7c7"></div>
<div class="t" style="left:0;width:45px;text-align:center;top:905.5px;font-size:11px;color:#444746;">30</div>
<div class="a" style="left:0;top:943px;width:45px;height:1px;background:#c7c7c7"></div>
<div class="t" style="left:0;width:45px;text-align:center;top:926.5px;font-size:11px;color:#444746;">31</div>
<div class="a" style="left:0;top:964px;width:45px;height:1px;background:#c7c7c7"></div>
<div class="t" style="left:0;width:45px;text-align:center;top:947.5px;font-size:11px;color:#444746;">32</div>
<div class="a" style="left:0;top:985px;width:45px;height:1px;background:#c7c7c7"></div>
<div class="t" style="left:0;width:45px;text-align:center;top:968.5px;font-size:11px;color:#444746;">33</div>
<div class="a" style="left:0;top:1006px;width:45px;height:1px;background:#c7c7c7"></div>
<div class="t" style="left:0;width:45px;text-align:center;top:989.5px;font-size:11px;color:#444746;">34</div>
<div class="a" style="left:0;top:1027px;width:45px;height:1px;background:#c7c7c7"></div>
<div class="t" style="left:0;width:45px;text-align:center;top:1010.5px;font-size:11px;color:#444746;">35</div>
<div class="a" style="left:0;top:422px;width:1852px;height:4px;background:#c7c7c7"></div>
<div class="a" style="left:247px;top:325px;width:1605px;height:2px;background:#0a8f4a"></div>
<div class="a" style="left:46px;top:286px;width:201px;height:41px;border:2px solid #1b5fe0;border-left-width:1.5px"></div>
<svg style="left:0;top:0" width="200" height="330">
<g fill="none" stroke="#574a4a" stroke-width="1.9" stroke-linecap="round">
<path d="M53.5 291.5 C54 294 55.5 295 57.5 295 C59.5 291 62.5 288.8 66 288.8 C69.5 288.8 72.5 291 74.5 295 C76.5 295 78 294 78.5 291.5"/>
<path d="M56.5 295.5 C55.2 299 55 303 56 307 C57.5 312 61 316.5 66 318 C71 316.5 74.5 312 76 307 C77 303 76.8 299 75.5 295.5"/>
<circle cx="60.6" cy="298.6" r="3.3"/><circle cx="71.2" cy="298.6" r="3.3"/>
<path d="M66 293.5 V305"/>
<path d="M62.5 314 L64 312.5 M66 315 V312.5 M69.5 314 L68 312.5" stroke-width="1.2"/>
</g>
<path d="M47 311.3 H85" stroke="#574a4a" stroke-width="1.6"/>
<circle cx="60.6" cy="298.6" r="1.1" fill="#574a4a"/><circle cx="71.2" cy="298.6" r="1.1" fill="#574a4a"/>
<g fill="none" stroke-width="2.5" stroke-linejoin="miter" stroke-miterlimit="1.5">
<path d="M86.2 292.3 L90.8 311.6 L102.3 292.3" stroke="#d42a2a"/>
<path d="M107.3 293.5 L104.3 311.8" stroke="#d42a2a"/>
<path d="M112.5 293 H125.5 L110.8 310.8 H124.2" stroke="#4a4141"/>
<path d="M131 292.3 L128.8 304.5 C127.7 310 130 311.8 134.2 311.8 C138.6 311.8 140.8 310 141.8 304.5 L144.2 292.3" stroke="#d42a2a"/>
<path d="M146.2 311.8 L157.6 292.3 L162.2 311.8 M150.4 305 H160.5" stroke="#d42a2a"/>
<path d="M168 292.3 L164.6 310.8 H178.2" stroke="#d42a2a"/>
</g>
<circle cx="108.3" cy="289.3" r="1.5" fill="#f6b500"/>
<circle cx="181.8" cy="289.6" r="1.7" fill="none" stroke="#8a7f7f" stroke-width="0.8"/>
<text x="47" y="324.5" font-family="Liberation Sans" font-size="5.8" fill="#5e5454" textLength="90" lengthAdjust="spacingAndGlyphs">PLANILHAS EMPRESARIAIS</text>
<path d="M139 322.3 H178" stroke="#5e5454" stroke-width="1.1"/>
</svg>
<div class="t" style="left:49px;top:333px;font-size:13px;font-weight:bold;font-style:italic;letter-spacing:0.15px;color:#666666">Versão 7.0 Google</div>
<div class="t" style="left:49px;top:379px;font-size:13.6px;color:#000">Selecione o Funcionário&gt;</div>
<div class="a" style="left:246px;top:362px;width:387px;height:47px;background:#f3f3f3;border:1px solid #cccccc"></div>
<div class="t" style="left:246px;width:366px;text-align:center;top:379px;font-size:13.4px;color:#000">Maria Silva</div>
<svg style="left:616px;top:383px" width="10" height="5"><path d="M0 0 H10 L5 5 Z" fill="#7a7a7a"/></svg>
<div class="t" style="left:672px;top:379px;font-size:13.5px;color:#000">Admissão&gt;</div>
<div class="a" style="left:778px;top:362px;width:220px;height:47px;background:#fff;border:1px solid #cccccc"></div>
<div class="t" style="left:778px;width:220px;text-align:center;top:379px;font-size:14px;color:#000">10/05/2022</div>
<div class="t" style="left:1044px;top:379px;font-size:13.3px;color:#000">Função&gt;</div>
<div class="a" style="left:1143px;top:362px;width:220px;height:47px;background:#fff;border:1px solid #cccccc"></div>
<div class="t" style="left:1143px;width:220px;text-align:center;top:379px;font-size:13.4px;color:#000">Analista de RH</div>
<!--BODY-->
<div class="a" style="left:46px;top:446px;width:200px;height:59px;background:#009a55"></div>
<div class="t" style="left:46px;width:200px;text-align:center;top:468.5px;font-size:13.3px;font-weight:bold;color:#fff">CADASTROS</div>
<div class="a" style="left:46px;top:505px;width:200px;height:40px;background:#009a55"></div>
<div class="t" style="left:46px;width:200px;text-align:center;top:518.0px;font-size:13.3px;font-weight:bold;color:#fff">FOLHA</div>
<div class="a" style="left:46px;top:545px;width:200px;height:40px;background:#009a55"></div>
<div class="t" style="left:46px;width:200px;text-align:center;top:558.0px;font-size:13.3px;font-weight:bold;color:#fff">RELATÓRIOS</div>
<div class="a" style="left:46px;top:585px;width:200px;height:40px;background:#009a55"></div>
<div class="t" style="left:46px;width:200px;text-align:center;top:598.0px;font-size:13.3px;font-weight:bold;color:#fff">DASHBOARDS</div>
<div class="a" style="left:46px;top:625px;width:200px;height:40px;background:#ffffff"></div>
<div class="t" style="left:49px;top:638.0px;font-size:13.2px;font-weight:bold;color:#000">■ Geral</div>
<div class="a" style="left:46px;top:665px;width:200px;height:40px;background:#b6d7a8"></div>
<div class="t" style="left:49px;top:678.0px;font-size:13.2px;font-weight:bold;color:#000">■ Funcionários</div>
<div class="a" style="left:46px;top:705px;width:200px;height:41px;background:#009a55"></div>
<div class="t" style="left:46px;width:200px;text-align:center;top:718.5px;font-size:13.3px;font-weight:bold;color:#fff">AJUDA</div>
<div class="a" style="left:46px;top:505px;width:200px;height:1px;background:#d9e6dc"></div>
<div class="a" style="left:46px;top:545px;width:200px;height:1px;background:#d9e6dc"></div>
<div class="a" style="left:46px;top:585px;width:200px;height:1px;background:#d9e6dc"></div>
<div class="a" style="left:46px;top:625px;width:200px;height:1px;background:#d9e6dc"></div>
<div class="a" style="left:46px;top:665px;width:200px;height:1px;background:#cacaca"></div>
<div class="a" style="left:46px;top:705px;width:200px;height:1px;background:#cacaca"></div>
<div class="a" style="left:246px;top:625px;width:1px;height:81px;background:#cacaca"></div>
<div class="t" style="left:263px;top:448px;font-size:15.2px;font-weight:bold;color:#000">Grafico de Vencimentos</div>
<div class="t" style="left:344px;top:709.5px;font-size:13.2px;font-style:italic;color:#666">Atenção: todos os vencimentos do mês em questão estão levando em consideração o adiantamento salarial do mês seguinte.</div>
<div class="a" style="left:266px;top:470px;width:1485px;height:241px;background:#fff;border:1px solid #9e9e9e"></div>
<div class="t" style="left:252px;width:60px;text-align:right;top:482.8px;font-size:12px;color:#000">20000</div>
<div class="t" style="left:252px;width:60px;text-align:right;top:524.2px;font-size:12px;color:#000">15000</div>
<div class="t" style="left:252px;width:60px;text-align:right;top:565.9px;font-size:12px;color:#000">10000</div>
<div class="t" style="left:252px;width:60px;text-align:right;top:607.3px;font-size:12px;color:#000">5000</div>
<div class="t" style="left:252px;width:60px;text-align:right;top:649.0px;font-size:12px;color:#000">0</div>
<div class="t" style="left:346px;width:100px;text-align:center;top:663px;font-size:12.5px;color:#000">Janeiro</div>
<div class="t" style="left:461px;width:100px;text-align:center;top:663px;font-size:12.5px;color:#000">Fevereiro</div>
<div class="t" style="left:576px;width:100px;text-align:center;top:663px;font-size:12.5px;color:#000">Março</div>
<div class="t" style="left:691px;width:100px;text-align:center;top:663px;font-size:12.5px;color:#000">Abril</div>
<div class="t" style="left:806px;width:100px;text-align:center;top:663px;font-size:12.5px;color:#000">Maio</div>
<div class="t" style="left:921px;width:100px;text-align:center;top:663px;font-size:12.5px;color:#000">Junho</div>
<div class="t" style="left:1036px;width:100px;text-align:center;top:663px;font-size:12.5px;color:#000">Julho</div>
<div class="t" style="left:1151px;width:100px;text-align:center;top:663px;font-size:12.5px;color:#000">Agosto</div>
<div class="t" style="left:1266px;width:100px;text-align:center;top:663px;font-size:12.5px;color:#000">Setembro</div>
<div class="t" style="left:1381px;width:100px;text-align:center;top:663px;font-size:12.5px;color:#000">Outubro</div>
<div class="t" style="left:1496px;width:100px;text-align:center;top:663px;font-size:12.5px;color:#000">Novembro</div>
<div class="t" style="left:1611px;width:100px;text-align:center;top:663px;font-size:12.5px;color:#000">Dezembro</div>
<svg style="left:0;top:0" width="1920" height="1080">
<path d="M359.5 655.0 V582.63 Q359.5 580.63 361.5 580.63 H380.5 Q382.5 580.63 382.5 582.63 V655.0 Z" fill="#009a55"/>
<path d="M384.5 655.0 V622.01 Q384.5 620.01 386.5 620.01 H405.5 Q407.5 620.01 407.5 622.01 V655.0 Z" fill="#c11c17"/>
<path d="M409.5 655.0 V617.62 Q409.5 615.62 411.5 615.62 H430.5 Q432.5 615.62 432.5 617.62 V655.0 Z" fill="#f1bb32"/>
<path d="M474.5 655.0 V582.63 Q474.5 580.63 476.5 580.63 H495.5 Q497.5 580.63 497.5 582.63 V655.0 Z" fill="#009a55"/>
<path d="M499.5 655.0 V622.01 Q499.5 620.01 501.5 620.01 H520.5 Q522.5 620.01 522.5 622.01 V655.0 Z" fill="#c11c17"/>
<path d="M524.5 655.0 V617.62 Q524.5 615.62 526.5 615.62 H545.5 Q547.5 615.62 547.5 617.62 V655.0 Z" fill="#f1bb32"/>
<path d="M589.5 655.0 V582.63 Q589.5 580.63 591.5 580.63 H610.5 Q612.5 580.63 612.5 582.63 V655.0 Z" fill="#009a55"/>
<path d="M614.5 655.0 V622.01 Q614.5 620.01 616.5 620.01 H635.5 Q637.5 620.01 637.5 622.01 V655.0 Z" fill="#c11c17"/>
<path d="M639.5 655.0 V617.62 Q639.5 615.62 641.5 615.62 H660.5 Q662.5 615.62 662.5 617.62 V655.0 Z" fill="#f1bb32"/>
<path d="M704.5 655.0 V528.68 Q704.5 526.68 706.5 526.68 H725.5 Q727.5 526.68 727.5 528.68 V655.0 Z" fill="#009a55"/>
<path d="M729.5 655.0 V591.61 Q729.5 589.61 731.5 589.61 H750.5 Q752.5 589.61 752.5 591.61 V655.0 Z" fill="#c11c17"/>
<path d="M754.5 655.0 V594.07 Q754.5 592.07 756.5 592.07 H775.5 Q777.5 592.07 777.5 594.07 V655.0 Z" fill="#f1bb32"/>
<path d="M819.5 655.0 V582.63 Q819.5 580.63 821.5 580.63 H840.5 Q842.5 580.63 842.5 582.63 V655.0 Z" fill="#009a55"/>
<path d="M844.5 655.0 V622.01 Q844.5 620.01 846.5 620.01 H865.5 Q867.5 620.01 867.5 622.01 V655.0 Z" fill="#c11c17"/>
<path d="M869.5 655.0 V617.62 Q869.5 615.62 871.5 615.62 H890.5 Q892.5 615.62 892.5 617.62 V655.0 Z" fill="#f1bb32"/>
<path d="M934.5 655.0 V582.63 Q934.5 580.63 936.5 580.63 H955.5 Q957.5 580.63 957.5 582.63 V655.0 Z" fill="#009a55"/>
<path d="M959.5 655.0 V622.01 Q959.5 620.01 961.5 620.01 H980.5 Q982.5 620.01 982.5 622.01 V655.0 Z" fill="#c11c17"/>
<path d="M984.5 655.0 V617.62 Q984.5 615.62 986.5 615.62 H1005.5 Q1007.5 615.62 1007.5 617.62 V655.0 Z" fill="#f1bb32"/>
<path d="M1049.5 655.0 V582.63 Q1049.5 580.63 1051.5 580.63 H1070.5 Q1072.5 580.63 1072.5 582.63 V655.0 Z" fill="#009a55"/>
<path d="M1074.5 655.0 V622.01 Q1074.5 620.01 1076.5 620.01 H1095.5 Q1097.5 620.01 1097.5 622.01 V655.0 Z" fill="#c11c17"/>
<path d="M1099.5 655.0 V617.62 Q1099.5 615.62 1101.5 615.62 H1120.5 Q1122.5 615.62 1122.5 617.62 V655.0 Z" fill="#f1bb32"/>
<path d="M1164.5 655.0 V582.63 Q1164.5 580.63 1166.5 580.63 H1185.5 Q1187.5 580.63 1187.5 582.63 V655.0 Z" fill="#009a55"/>
<path d="M1189.5 655.0 V622.01 Q1189.5 620.01 1191.5 620.01 H1210.5 Q1212.5 620.01 1212.5 622.01 V655.0 Z" fill="#c11c17"/>
<path d="M1214.5 655.0 V617.62 Q1214.5 615.62 1216.5 615.62 H1235.5 Q1237.5 615.62 1237.5 617.62 V655.0 Z" fill="#f1bb32"/>
<path d="M1279.5 655.0 V582.63 Q1279.5 580.63 1281.5 580.63 H1300.5 Q1302.5 580.63 1302.5 582.63 V655.0 Z" fill="#009a55"/>
<path d="M1304.5 655.0 V622.01 Q1304.5 620.01 1306.5 620.01 H1325.5 Q1327.5 620.01 1327.5 622.01 V655.0 Z" fill="#c11c17"/>
<path d="M1329.5 655.0 V617.62 Q1329.5 615.62 1331.5 615.62 H1350.5 Q1352.5 615.62 1352.5 617.62 V655.0 Z" fill="#f1bb32"/>
<path d="M1394.5 655.0 V582.63 Q1394.5 580.63 1396.5 580.63 H1415.5 Q1417.5 580.63 1417.5 582.63 V655.0 Z" fill="#009a55"/>
<path d="M1419.5 655.0 V622.01 Q1419.5 620.01 1421.5 620.01 H1440.5 Q1442.5 620.01 1442.5 622.01 V655.0 Z" fill="#c11c17"/>
<path d="M1444.5 655.0 V617.62 Q1444.5 615.62 1446.5 615.62 H1465.5 Q1467.5 615.62 1467.5 617.62 V655.0 Z" fill="#f1bb32"/>
<path d="M1509.5 655.0 V582.63 Q1509.5 580.63 1511.5 580.63 H1530.5 Q1532.5 580.63 1532.5 582.63 V655.0 Z" fill="#009a55"/>
<path d="M1534.5 655.0 V622.01 Q1534.5 620.01 1536.5 620.01 H1555.5 Q1557.5 620.01 1557.5 622.01 V655.0 Z" fill="#c11c17"/>
<path d="M1559.5 655.0 V617.62 Q1559.5 615.62 1561.5 615.62 H1580.5 Q1582.5 615.62 1582.5 617.62 V655.0 Z" fill="#f1bb32"/>
<path d="M1624.5 655.0 V582.63 Q1624.5 580.63 1626.5 580.63 H1645.5 Q1647.5 580.63 1647.5 582.63 V655.0 Z" fill="#009a55"/>
<path d="M1649.5 655.0 V622.01 Q1649.5 620.01 1651.5 620.01 H1670.5 Q1672.5 620.01 1672.5 622.01 V655.0 Z" fill="#c11c17"/>
<path d="M1674.5 655.0 V617.62 Q1674.5 615.62 1676.5 615.62 H1695.5 Q1697.5 615.62 1697.5 617.62 V655.0 Z" fill="#f1bb32"/>
<text x="372.7" y="563.7" text-anchor="middle" font-family="Liberation Sans" font-weight="bold" font-size="12.25" fill="#0e9d59" xml:space="preserve">R$  8.960,00</text>
<text x="397.7" y="603.1" text-anchor="middle" font-family="Liberation Sans" font-weight="bold" font-size="12.25" fill="#c8201c" stroke="#fff" stroke-width="3.6" stroke-linejoin="round" paint-order="stroke" xml:space="preserve">R$  4.215,39</text>
<text x="422.7" y="631.9" text-anchor="middle" font-family="Liberation Sans" font-weight="bold" font-size="12.25" fill="#000" stroke="#f1bb32" stroke-width="3.6" stroke-linejoin="round" paint-order="stroke" xml:space="preserve">R$  4.744,61</text>
<text x="487.7" y="563.7" text-anchor="middle" font-family="Liberation Sans" font-weight="bold" font-size="12.25" fill="#0e9d59" xml:space="preserve">R$  8.960,00</text>
<text x="512.7" y="603.1" text-anchor="middle" font-family="Liberation Sans" font-weight="bold" font-size="12.25" fill="#c8201c" stroke="#fff" stroke-width="3.6" stroke-linejoin="round" paint-order="stroke" xml:space="preserve">R$  4.215,39</text>
<text x="537.7" y="631.9" text-anchor="middle" font-family="Liberation Sans" font-weight="bold" font-size="12.25" fill="#000" stroke="#f1bb32" stroke-width="3.6" stroke-linejoin="round" paint-order="stroke" xml:space="preserve">R$  4.744,61</text>
<text x="602.7" y="563.7" text-anchor="middle" font-family="Liberation Sans" font-weight="bold" font-size="12.25" fill="#0e9d59" xml:space="preserve">R$  8.960,00</text>
<text x="627.7" y="603.1" text-anchor="middle" font-family="Liberation Sans" font-weight="bold" font-size="12.25" fill="#c8201c" stroke="#fff" stroke-width="3.6" stroke-linejoin="round" paint-order="stroke" xml:space="preserve">R$  4.215,39</text>
<text x="652.7" y="631.9" text-anchor="middle" font-family="Liberation Sans" font-weight="bold" font-size="12.25" fill="#000" stroke="#f1bb32" stroke-width="3.6" stroke-linejoin="round" paint-order="stroke" xml:space="preserve">R$  4.744,61</text>
<text x="717.7" y="509.8" text-anchor="middle" font-family="Liberation Sans" font-weight="bold" font-size="12.25" fill="#0e9d59" xml:space="preserve">R$  15.460,00</text>
<text x="742.7" y="572.7" text-anchor="middle" font-family="Liberation Sans" font-weight="bold" font-size="12.25" fill="#c8201c" stroke="#fff" stroke-width="3.6" stroke-linejoin="round" paint-order="stroke" xml:space="preserve">R$  7.878,59</text>
<text x="767.7" y="608.4" text-anchor="middle" font-family="Liberation Sans" font-weight="bold" font-size="12.25" fill="#000" stroke="#f1bb32" stroke-width="3.6" stroke-linejoin="round" paint-order="stroke" xml:space="preserve">R$  7.581,41</text>
<text x="832.7" y="563.7" text-anchor="middle" font-family="Liberation Sans" font-weight="bold" font-size="12.25" fill="#0e9d59" xml:space="preserve">R$  8.960,00</text>
<text x="857.7" y="603.1" text-anchor="middle" font-family="Liberation Sans" font-weight="bold" font-size="12.25" fill="#c8201c" stroke="#fff" stroke-width="3.6" stroke-linejoin="round" paint-order="stroke" xml:space="preserve">R$  4.215,39</text>
<text x="882.7" y="631.9" text-anchor="middle" font-family="Liberation Sans" font-weight="bold" font-size="12.25" fill="#000" stroke="#f1bb32" stroke-width="3.6" stroke-linejoin="round" paint-order="stroke" xml:space="preserve">R$  4.744,61</text>
<text x="947.7" y="563.7" text-anchor="middle" font-family="Liberation Sans" font-weight="bold" font-size="12.25" fill="#0e9d59" xml:space="preserve">R$  8.960,00</text>
<text x="972.7" y="603.1" text-anchor="middle" font-family="Liberation Sans" font-weight="bold" font-size="12.25" fill="#c8201c" stroke="#fff" stroke-width="3.6" stroke-linejoin="round" paint-order="stroke" xml:space="preserve">R$  4.215,39</text>
<text x="997.7" y="631.9" text-anchor="middle" font-family="Liberation Sans" font-weight="bold" font-size="12.25" fill="#000" stroke="#f1bb32" stroke-width="3.6" stroke-linejoin="round" paint-order="stroke" xml:space="preserve">R$  4.744,61</text>
<text x="1062.7" y="563.7" text-anchor="middle" font-family="Liberation Sans" font-weight="bold" font-size="12.25" fill="#0e9d59" xml:space="preserve">R$  8.960,00</text>
<text x="1087.7" y="603.1" text-anchor="middle" font-family="Liberation Sans" font-weight="bold" font-size="12.25" fill="#c8201c" stroke="#fff" stroke-width="3.6" stroke-linejoin="round" paint-order="stroke" xml:space="preserve">R$  4.215,39</text>
<text x="1112.7" y="631.9" text-anchor="middle" font-family="Liberation Sans" font-weight="bold" font-size="12.25" fill="#000" stroke="#f1bb32" stroke-width="3.6" stroke-linejoin="round" paint-order="stroke" xml:space="preserve">R$  4.744,61</text>
<text x="1177.7" y="563.7" text-anchor="middle" font-family="Liberation Sans" font-weight="bold" font-size="12.25" fill="#0e9d59" xml:space="preserve">R$  8.960,00</text>
<text x="1202.7" y="603.1" text-anchor="middle" font-family="Liberation Sans" font-weight="bold" font-size="12.25" fill="#c8201c" stroke="#fff" stroke-width="3.6" stroke-linejoin="round" paint-order="stroke" xml:space="preserve">R$  4.215,39</text>
<text x="1227.7" y="631.9" text-anchor="middle" font-family="Liberation Sans" font-weight="bold" font-size="12.25" fill="#000" stroke="#f1bb32" stroke-width="3.6" stroke-linejoin="round" paint-order="stroke" xml:space="preserve">R$  4.744,61</text>
<text x="1292.7" y="563.7" text-anchor="middle" font-family="Liberation Sans" font-weight="bold" font-size="12.25" fill="#0e9d59" xml:space="preserve">R$  8.960,00</text>
<text x="1317.7" y="603.1" text-anchor="middle" font-family="Liberation Sans" font-weight="bold" font-size="12.25" fill="#c8201c" stroke="#fff" stroke-width="3.6" stroke-linejoin="round" paint-order="stroke" xml:space="preserve">R$  4.215,39</text>
<text x="1342.7" y="631.9" text-anchor="middle" font-family="Liberation Sans" font-weight="bold" font-size="12.25" fill="#000" stroke="#f1bb32" stroke-width="3.6" stroke-linejoin="round" paint-order="stroke" xml:space="preserve">R$  4.744,61</text>
<text x="1407.7" y="563.7" text-anchor="middle" font-family="Liberation Sans" font-weight="bold" font-size="12.25" fill="#0e9d59" xml:space="preserve">R$  8.960,00</text>
<text x="1432.7" y="603.1" text-anchor="middle" font-family="Liberation Sans" font-weight="bold" font-size="12.25" fill="#c8201c" stroke="#fff" stroke-width="3.6" stroke-linejoin="round" paint-order="stroke" xml:space="preserve">R$  4.215,39</text>
<text x="1457.7" y="631.9" text-anchor="middle" font-family="Liberation Sans" font-weight="bold" font-size="12.25" fill="#000" stroke="#f1bb32" stroke-width="3.6" stroke-linejoin="round" paint-order="stroke" xml:space="preserve">R$  4.744,61</text>
<text x="1522.7" y="563.7" text-anchor="middle" font-family="Liberation Sans" font-weight="bold" font-size="12.25" fill="#0e9d59" xml:space="preserve">R$  8.960,00</text>
<text x="1547.7" y="603.1" text-anchor="middle" font-family="Liberation Sans" font-weight="bold" font-size="12.25" fill="#c8201c" stroke="#fff" stroke-width="3.6" stroke-linejoin="round" paint-order="stroke" xml:space="preserve">R$  4.215,39</text>
<text x="1572.7" y="631.9" text-anchor="middle" font-family="Liberation Sans" font-weight="bold" font-size="12.25" fill="#000" stroke="#f1bb32" stroke-width="3.6" stroke-linejoin="round" paint-order="stroke" xml:space="preserve">R$  4.744,61</text>
<text x="1637.7" y="563.7" text-anchor="middle" font-family="Liberation Sans" font-weight="bold" font-size="12.25" fill="#0e9d59" xml:space="preserve">R$  8.960,00</text>
<text x="1662.7" y="603.1" text-anchor="middle" font-family="Liberation Sans" font-weight="bold" font-size="12.25" fill="#c8201c" stroke="#fff" stroke-width="3.6" stroke-linejoin="round" paint-order="stroke" xml:space="preserve">R$  4.215,39</text>
<text x="1687.7" y="631.9" text-anchor="middle" font-family="Liberation Sans" font-weight="bold" font-size="12.25" fill="#000" stroke="#f1bb32" stroke-width="3.6" stroke-linejoin="round" paint-order="stroke" xml:space="preserve">R$  4.744,61</text>
</svg>
<div class="a" style="left:873px;top:685px;width:12px;height:12px;background:#009a55"></div>
<div class="t" style="left:893px;top:685px;font-size:12.5px;color:#000">Vencimentos</div>
<div class="a" style="left:982px;top:685px;width:12px;height:12px;background:#c11c17"></div>
<div class="t" style="left:1002px;top:685px;font-size:12.5px;color:#000">Descontos</div>
<div class="a" style="left:1077px;top:685px;width:12px;height:12px;background:#f1bb32"></div>
<div class="t" style="left:1097px;top:685px;font-size:12.5px;color:#000">Liquidos</div>
<div class="t" style="left:344px;top:750px;font-size:15.2px;font-weight:bold;color:#000">Total dos Vencimentos</div>
<div class="a" style="left:340px;top:775px;width:293px;height:64px;background:#009a55"></div>
<div class="t" style="left:351px;top:797px;font-size:21px;letter-spacing:-1.5px;color:#fff">R$</div>
<div class="t" style="left:340px;width:283px;text-align:right;top:797px;font-size:21px;letter-spacing:0.4px;color:#fff">114.020,00</div>
<div class="t" style="left:709px;top:750px;font-size:15.2px;font-weight:bold;color:#000">Total dos Descontos</div>
<div class="a" style="left:705px;top:775px;width:293px;height:64px;background:#c11c17"></div>
<div class="t" style="left:716px;top:797px;font-size:21px;letter-spacing:-1.5px;color:#fff">R$</div>
<div class="t" style="left:705px;width:283px;text-align:right;top:797px;font-size:21px;letter-spacing:0.4px;color:#fff">54.247,85</div>
<div class="t" style="left:1074px;top:750px;font-size:15.2px;font-weight:bold;color:#000">Total Líquido</div>
<div class="a" style="left:1070px;top:775px;width:293px;height:64px;background:#f1bb32"></div>
<div class="t" style="left:1081px;top:797px;font-size:21px;letter-spacing:-1.5px;color:#fff">R$</div>
<div class="t" style="left:1070px;width:283px;text-align:right;top:797px;font-size:21px;letter-spacing:0.4px;color:#fff">59.772,15</div>
<div class="t" style="left:1439px;top:750px;font-size:15.2px;font-weight:bold;color:#000">Salário Atual</div>
<div class="a" style="left:1435px;top:775px;width:293px;height:64px;background:#2f62e1"></div>
<div class="t" style="left:1446px;top:797px;font-size:21px;letter-spacing:-1.5px;color:#fff">R$</div>
<div class="t" style="left:1435px;width:283px;text-align:right;top:797px;font-size:21px;letter-spacing:0.4px;color:#fff">4.500,00</div>
<!--/BODY-->

<!-- ============ RIGHT SIDE PANEL ============ -->
<div class="a" style="left:1864px;top:234px;width:56px;height:843px;background:#f9fbfd"></div>
<svg style="left:1882px;top:198px" width="19" height="19" viewBox="0 0 19 19"><rect x="0" y="0" width="19" height="19" rx="2" fill="#4285f4"/><rect x="0" y="15" width="19" height="4" fill="#34a853"/><rect x="15" y="0" width="4" height="15" fill="#fbbc04"/><rect x="0" y="0" width="4" height="15" fill="#1967d2"/><path d="M15 15 H19 L15 19 Z" fill="#ea4335"/><rect x="3.5" y="3.5" width="11.5" height="11.5" fill="#fff"/><text x="9.2" y="13" text-anchor="middle" font-family="Liberation Sans" font-size="7.5" font-weight="bold" fill="#4285f4">31</text></svg>
<svg style="left:1882px;top:254px" width="19" height="19" viewBox="0 0 19 19"><rect width="19" height="19" rx="2" fill="#fbbc04"/><circle cx="9.5" cy="8.2" r="3.6" fill="#fff"/><rect x="7.8" y="11" width="3.4" height="3.2" fill="#fff"/></svg>
<svg style="left:1881px;top:309px" width="21" height="21" viewBox="0 0 21 21"><circle cx="10" cy="11" r="7.5" fill="none" stroke="#2a6ef0" stroke-width="2.8"/><path d="M6.5 11 L9.5 14 L18 4" stroke="#2a6ef0" stroke-width="2.8" fill="none"/></svg>
<svg style="left:1882px;top:366px" width="19" height="19" viewBox="0 0 19 19"><circle cx="9.5" cy="4.5" r="3.6" fill="#1e4fd0"/><path d="M2 17 C2 12 5 10 9.5 10 C14 10 17 12 17 17 Z" fill="#1e4fd0"/><path d="M2 17 C2 14 3 12 5 11 L6 17 Z" fill="#6b9cf5"/></svg>
<svg style="left:1884px;top:420px" width="15" height="22" viewBox="0 0 13 18"><path d="M6.5 0.5 C3 0.5 0.5 3 0.5 6.3 C0.5 10.5 6.5 17.5 6.5 17.5 C6.5 17.5 12.5 10.5 12.5 6.3 C12.5 3 10 0.5 6.5 0.5 Z" fill="#34a853"/><path d="M6.5 0.5 C3 0.5 0.5 3 0.5 6.3 C0.5 7.5 1 8.7 1.6 9.8 L10.8 1.8 C9.7 1 8.2 0.5 6.5 0.5Z" fill="#4285f4"/><path d="M1.6 9.8 L4 7 L0.7 4.5 C0.5 5 0.5 5.6 0.5 6.3 C0.5 7.5 1 8.7 1.6 9.8Z" fill="#fbbc04"/><path d="M10.8 1.8 L6.5 5.5 L12.3 4.6 C12 3.5 11.5 2.5 10.8 1.8Z" fill="#ea4335"/><circle cx="6.5" cy="6.3" r="2.2" fill="#fff"/></svg>
<div class="a" style="left:1882px;top:476px;width:20px;height:1px;background:#c7c7c7"></div>
<svg style="left:1884px;top:514px" width="15" height="15"><path d="M7.5 0 V15 M0 7.5 H15" stroke="#1f1f1f" stroke-width="1.8"/></svg>
<svg style="left:1887px;top:1044px" width="8" height="12"><path d="M1 1 L6 6 L1 11" stroke="#444746" stroke-width="1.8" fill="none"/></svg>

<!-- ============ BOTTOM TABS ============ -->
<div class="a" style="left:0;top:1027px;width:1864px;height:14px;background:#fff"></div>
<div class="a" style="left:0;top:1028px;width:46px;height:13px;background:#f8f9fa;border-right:1px solid #e3e3e3"></div>
<div class="a" style="left:0;top:1028px;width:1852px;height:1px;background:#e3e3e3"></div>
<div class="a" style="left:48px;top:1030px;width:1325px;height:9px;border-radius:5px;background:#dadce0"></div>
<svg style="left:1825px;top:1031px" width="30" height="8"><path d="M5 0.5 L1.5 4 L5 7.5 Z" fill="#7a7a7a"/><path d="M19 0.5 L22.5 4 L19 7.5 Z" fill="#7a7a7a"/></svg>
<div class="a" style="left:1820px;top:1028px;width:1px;height:12px;background:#e3e3e3"></div>
<div class="a" style="left:1852px;top:1000px;width:12px;height:41px;background:#f8f9fa"></div>
<svg style="left:1853px;top:1000px" width="10" height="26"><path d="M1.5 6 L5 2.5 L8.5 6 Z" fill="#7a7a7a"/><path d="M1.5 18.5 L5 22 L8.5 18.5 Z" fill="#7a7a7a"/></svg>
<div class="a" style="left:1852px;top:1012px;width:12px;height:1px;background:#e3e3e3"></div>
<div class="a" style="left:1854px;top:427px;width:8px;height:26px;border-radius:4px;background:#dadce0"></div>
<div class="a" style="left:0;top:1041px;width:1864px;height:36px;background:#f9fbfd;border-top:1px solid #e3e3e3"></div>
<svg style="left:57px;top:1056px" width="10" height="10"><path d="M5 0 V10 M0 5 H10" stroke="#444746" stroke-width="1.8"/></svg>
<svg style="left:95px;top:1055px" width="14" height="11"><path d="M0 1 H14 M0 5.5 H14 M0 10 H14" stroke="#444746" stroke-width="1.6"/></svg>
<div class="a" style="left:125px;top:1050px;width:1px;height:20px;background:#c7c7c7"></div>
<div class="a" style="left:1595px;top:1042px;width:92px;height:36px;background:#e1e9f7"></div>
<div class="t" style="left:127px;top:1054px;font-size:14px;-webkit-text-stroke:0.2px currentColor;color:#444746">JAN</div>
<svg style="left:163.5px;top:1059px" width="8" height="5"><path d="M0 0 H8 L4 4.5 Z" fill="#444746"/></svg>
<div class="t" style="left:197px;top:1054px;font-size:14px;-webkit-text-stroke:0.2px currentColor;color:#444746">FEV</div>
<svg style="left:233.5px;top:1059px" width="8" height="5"><path d="M0 0 H8 L4 4.5 Z" fill="#444746"/></svg>
<div class="t" style="left:267.5px;top:1054px;font-size:14px;-webkit-text-stroke:0.2px currentColor;color:#444746">MAR</div>
<svg style="left:309.5px;top:1059px" width="8" height="5"><path d="M0 0 H8 L4 4.5 Z" fill="#444746"/></svg>
<div class="t" style="left:343px;top:1054px;font-size:14px;-webkit-text-stroke:0.2px currentColor;color:#444746">ABR</div>
<svg style="left:382.5px;top:1059px" width="8" height="5"><path d="M0 0 H8 L4 4.5 Z" fill="#444746"/></svg>
<div class="t" style="left:415.5px;top:1054px;font-size:14px;-webkit-text-stroke:0.2px currentColor;color:#444746">MAI</div>
<svg style="left:452.5px;top:1059px" width="8" height="5"><path d="M0 0 H8 L4 4.5 Z" fill="#444746"/></svg>
<div class="t" style="left:486.5px;top:1054px;font-size:14px;-webkit-text-stroke:0.2px currentColor;color:#444746">JUN</div>
<svg style="left:525.5px;top:1059px" width="8" height="5"><path d="M0 0 H8 L4 4.5 Z" fill="#444746"/></svg>
<div class="t" style="left:559px;top:1054px;font-size:14px;-webkit-text-stroke:0.2px currentColor;color:#444746">JUL</div>
<svg style="left:596.5px;top:1059px" width="8" height="5"><path d="M0 0 H8 L4 4.5 Z" fill="#444746"/></svg>
<div class="t" style="left:630px;top:1054px;font-size:14px;-webkit-text-stroke:0.2px currentColor;color:#444746">AGO</div>
<svg style="left:672.5px;top:1059px" width="8" height="5"><path d="M0 0 H8 L4 4.5 Z" fill="#444746"/></svg>
<div class="t" style="left:706px;top:1054px;font-size:14px;-webkit-text-stroke:0.2px currentColor;color:#444746">SET</div>
<svg style="left:743.5px;top:1059px" width="8" height="5"><path d="M0 0 H8 L4 4.5 Z" fill="#444746"/></svg>
<div class="t" style="left:776.5px;top:1054px;font-size:14px;-webkit-text-stroke:0.2px currentColor;color:#444746">OUT</div>
<svg style="left:817.5px;top:1059px" width="8" height="5"><path d="M0 0 H8 L4 4.5 Z" fill="#444746"/></svg>
<div class="t" style="left:851.5px;top:1054px;font-size:14px;-webkit-text-stroke:0.2px currentColor;color:#444746">NOV</div>
<svg style="left:892.5px;top:1059px" width="8" height="5"><path d="M0 0 H8 L4 4.5 Z" fill="#444746"/></svg>
<div class="t" style="left:925.5px;top:1054px;font-size:14px;-webkit-text-stroke:0.2px currentColor;color:#444746">DEZ</div>
<svg style="left:964.0px;top:1059px" width="8" height="5"><path d="M0 0 H8 L4 4.5 Z" fill="#444746"/></svg>
<div class="t" style="left:998.5px;top:1054px;font-size:14px;-webkit-text-stroke:0.2px currentColor;color:#444746">FOLHA</div>
<svg style="left:1056.5px;top:1059px" width="8" height="5"><path d="M0 0 H8 L4 4.5 Z" fill="#444746"/></svg>
<div class="t" style="left:1090.5px;top:1054px;font-size:14px;-webkit-text-stroke:0.2px currentColor;color:#444746">REL_SIM</div>
<svg style="left:1160.5px;top:1059px" width="8" height="5"><path d="M0 0 H8 L4 4.5 Z" fill="#444746"/></svg>
<div class="t" style="left:1194px;top:1054px;font-size:14px;-webkit-text-stroke:0.2px currentColor;color:#444746">REL_COM</div>
<svg style="left:1271.5px;top:1059px" width="8" height="5"><path d="M0 0 H8 L4 4.5 Z" fill="#444746"/></svg>
<div class="t" style="left:1305px;top:1054px;font-size:14px;-webkit-text-stroke:0.2px currentColor;color:#444746">REL_FER</div>
<svg style="left:1375.5px;top:1059px" width="8" height="5"><path d="M0 0 H8 L4 4.5 Z" fill="#444746"/></svg>
<div class="t" style="left:1409px;top:1054px;font-size:14px;-webkit-text-stroke:0.2px currentColor;color:#444746">SAL_HOR</div>
<svg style="left:1485.5px;top:1059px" width="8" height="5"><path d="M0 0 H8 L4 4.5 Z" fill="#444746"/></svg>
<div class="t" style="left:1519px;top:1054px;font-size:14px;-webkit-text-stroke:0.2px currentColor;color:#444746">DASH1</div>
<svg style="left:1574.5px;top:1059px" width="8" height="5"><path d="M0 0 H8 L4 4.5 Z" fill="#444746"/></svg>
<div class="t" style="left:1607.5px;top:1054px;font-size:14px;-webkit-text-stroke:0.2px currentColor;font-weight:bold;color:#0b57d0">DASH2</div>
<svg style="left:1666.5px;top:1059px" width="8" height="5"><path d="M0 0 H8 L4 4.5 Z" fill="#0b57d0"/></svg>
<svg style="left:1706px;top:1055px" width="8" height="12"><path d="M7 1 L2 6 L7 11" stroke="#444746" stroke-width="1.8" fill="none"/></svg>
<svg style="left:1746px;top:1055px" width="8" height="12"><path d="M1 1 L6 6 L1 11" stroke="#b4b7bb" stroke-width="1.8" fill="none"/></svg>
<div class="a" style="left:0;top:1078px;width:1920px;height:2px;background:#000"></div>

</body></html>
